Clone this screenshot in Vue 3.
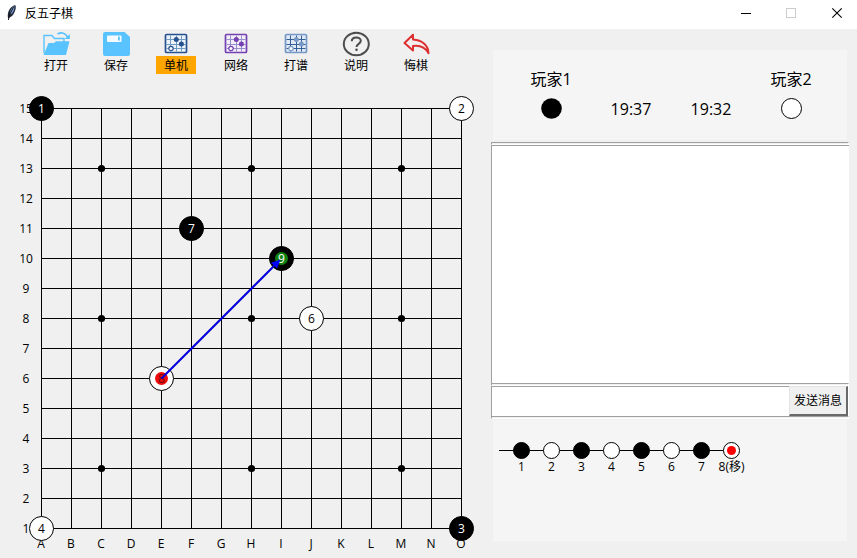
<script setup>
const tools = [
  { id: 'open', label: '打开' },
  { id: 'save', label: '保存' },
  { id: 'single', label: '单机', active: true, dark: '#27528f', line: '#6f9cc4', fill: '#edf3f8' },
  { id: 'net', label: '网络', dark: '#7440b2', line: '#9590c9', fill: '#f3edfa' },
  { id: 'record', label: '打谱', dark: '#7898c6', line: '#345e97', fill: '#e1e9f4' },
  { id: 'help', label: '说明' },
  { id: 'undo', label: '悔棋' },
]
const px = (c) => 41.5 + c * 30
const py = (row) => 18.5 + (15 - row) * 30
const lines = Array.from({ length: 15 }, (_, i) => i)
const letters = 'ABCDEFGHIJKLMNO'.split('')
const stars = [2, 7, 12].flatMap((c) => [3, 8, 13].map((r) => ({ c, r })))
const stones = [
  { c: 0, r: 15, n: 1, black: true },
  { c: 14, r: 15, n: 2 },
  { c: 14, r: 1, n: 3, black: true },
  { c: 0, r: 1, n: 4 },
  { c: 9, r: 8, n: 6 },
  { c: 5, r: 11, n: 7, black: true },
  { c: 4, r: 6, n: 8, mark: '#ee0c0c' },
  { c: 8, r: 10, n: 9, black: true, mark: '#108010' },
]
const moves = ['1', '2', '3', '4', '5', '6', '7', '8(移)']
</script>

<template>
  <div class="window">
    <header class="titlebar">
      <svg class="feather" width="12" height="18" viewBox="0 0 12 18">
        <path d="M2 14C1 9 3 3 9 1c2 1 0 8-3 11l-3 2z" fill="#20283a" />
        <path d="M4 10C4 6 6 3 8.500 2c0 3-1 6-3 8z" fill="#7fa3dc" />
        <path d="M7.500 3L3 12l-.5 4" stroke="#111" fill="none" />
      </svg>
      <span class="title">反五子棋</span>
      <svg class="controls" width="137" height="29" viewBox="0 0 137 29" shape-rendering="crispEdges">
        <path d="M21 13.500h10" stroke="#000" />
        <rect x="66.500" y="8.500" width="9" height="9" fill="none" stroke="#ccc" />
        <path d="M112.300 8.300l9.400 9.400M121.700 8.300l-9.400 9.400" stroke="#000" shape-rendering="auto" stroke-width="1.100" />
      </svg>
    </header>

    <main class="content">
      <section class="left">
        <nav class="toolbar">
          <div v-for="t in tools" :key="t.id" class="tool">
            <svg width="28" height="26" viewBox="0 0 28 26">
              <g v-if="t.id === 'open'">
                <path d="M2 22V4.500h8l2.500 3H22V11" fill="none" stroke="#58c3ff" stroke-width="1.400" />
                <path d="M6.500 12H12l2-1.800h13.500L24 24H1.500z" fill="#58c3ff" />
                <path d="M15.500 3c4-2 8-1 10 3" fill="none" stroke="#58c3ff" stroke-width="1.800" />
                <path d="M27.800 3v5h-5z" fill="#58c3ff" />
              </g>
              <g v-else-if="t.id === 'save'">
                <path d="M3 1h19.500L28 6v17q0 2-2 2H3q-2 0-2-2V3q0-2 2-2z" fill="#58c3ff" />
                <rect x="5" y="4.500" width="14.500" height="6.500" rx="1" fill="#f6fbff" />
                <rect x="16" y="5.500" width="1.800" height="4" fill="#58c3ff" />
              </g>
              <g v-else-if="t.dark">
                <rect x="3.500" y="3.500" width="21" height="18" rx="1" :fill="t.fill" :stroke="t.dark" stroke-width="1.700" />
                <path d="M8.500 4.500v16M14.500 4.500v16M19.500 4.500v16M4.500 8.500h19M4.500 13.500h19M4.500 17.500h19" :stroke="t.line" stroke-width="1" />
                <circle cx="14.300" cy="8.500" r="2.500" :fill="t.dark" />
                <circle cx="19.400" cy="13" r="2.500" :fill="t.dark" />
                <circle cx="9" cy="17.500" r="2.200" fill="#fff" :stroke="t.dark" stroke-width="1.200" />
              </g>
              <g v-else-if="t.id === 'help'" fill="none" stroke="#4c4c4c">
                <ellipse cx="14.300" cy="13" rx="12.500" ry="11.200" stroke-width="2" />
                <path d="M9.800 10.300c0-5 9-5 9-.5 0 3.200-4.300 3-4.300 6.200" stroke-width="2" />
                <circle cx="14.500" cy="18.800" r="1.300" fill="#4c4c4c" stroke="none" />
              </g>
              <path v-else d="M11 3.700L2.500 12l8.500 7.500V15c7-1 12 1 15.500 7.200-.2-7.500-6-13.200-15.500-13.700z" fill="#f5eeee" stroke="#dc3030" stroke-width="2" stroke-linejoin="round" />
            </svg>
            <span class="tool-label" :class="{ active: t.active }">{{ t.label }}</span>
          </div>
        </nav>

        <svg class="board" width="491" height="468" viewBox="0 0 491 468">
          <g stroke="#000" shape-rendering="crispEdges">
            <template v-for="i in lines" :key="i">
              <line :x1="px(i)" y1="18" :x2="px(i)" y2="439" />
              <line x1="41" :y1="py(i + 1)" x2="462" :y2="py(i + 1)" />
            </template>
          </g>
          <circle v-for="s in stars" :key="s.c + '-' + s.r" :cx="px(s.c)" :cy="py(s.r)" r="3.600" />
          <g class="label">
            <text v-for="i in lines" :key="i" x="26" :y="py(i + 1) + 4.500">{{ i + 1 }}</text>
            <text v-for="(l, i) in letters" :key="l" :x="px(i) - 0.500" y="458">{{ l }}</text>
          </g>
          <g v-for="s in stones" :key="s.n" class="label">
            <circle :cx="px(s.c)" :cy="py(s.r)" r="12" :fill="s.black ? '#000' : '#fff'" stroke="#000" />
            <circle v-if="s.mark" :cx="px(s.c)" :cy="py(s.r)" r="6.500" :fill="s.mark" />
            <text :x="px(s.c)" :y="py(s.r) + 4.500" :class="{ light: s.black, maroon: s.n === 8 }">{{ s.n }}</text>
          </g>
          <path d="M161.500 288.500L276 174" stroke="#0000d8" stroke-width="2" />
          <path d="M280.500 169.500l-3.500 9-2.500-3-4-2.500z" fill="#00f" />
        </svg>
      </section>

      <section class="right">
        <div class="players">
          <div class="player">
            <span>玩家1</span>
            <svg width="22" height="22"><circle cx="11.500" cy="10.500" r="10.300" /></svg>
          </div>
          <span class="clock">19:37</span>
          <span class="clock">19:32</span>
          <div class="player">
            <span>玩家2</span>
            <svg width="22" height="22"><circle cx="11.500" cy="10.500" r="10" fill="#fff" stroke="#000" /></svg>
          </div>
        </div>
        <div class="sash"></div>
        <div class="messages"></div>
        <div class="sash"></div>
        <div class="entry">
          <div class="field"></div>
          <button class="send">发送消息</button>
        </div>
        <div class="sash"></div>
        <svg class="history" width="354" height="121" viewBox="0 0 354 121">
          <path d="M6 30.500h232" stroke="#000" />
          <g v-for="(m, i) in moves" :key="m" class="label">
            <circle :cx="28.500 + i * 30" cy="30.500" r="8" :fill="i % 2 ? '#fff' : '#000'" stroke="#000" />
            <circle v-if="i === 7" :cx="28.500 + i * 30" cy="30.500" r="4.500" fill="#f00" />
            <text :x="28.500 + i * 30" y="51">{{ m }}</text>
          </g>
        </svg>
      </section>
    </main>
  </div>
</template>

<style>
body {
  margin: 0;
  overflow: hidden;
}
</style>

<style scoped>
.window {
  width: 857px;
  height: 558px;
  background: #f0f0f0;
  color: #000;
  font: 12px "Open Sans", "Noto Sans CJK SC", sans-serif;
}
.titlebar {
  display: flex;
  height: 29px;
  background: #fff;
}
.feather {
  margin: 4px 0 0 6px;
}
.title {
  margin-left: 7px;
  line-height: 27px;
}
.controls {
  margin-left: auto;
}
.content {
  display: flex;
  height: 529px;
}
.left {
  width: 491px;
}
.toolbar {
  display: flex;
  height: 59px;
  padding: 2px 0 0 26px;
  box-sizing: border-box;
}
.tool {
  display: flex;
  flex-direction: column;
  align-items: center;
  width: 60px;
}
.tool svg {
  flex: none;
  margin-bottom: -1px;
}
.tool-label {
  width: 40px;
  height: 18px;
  line-height: 20px;
  text-align: center;
}
.active {
  background: #ffa500;
}
.board {
  display: block;
  margin-top: 2px;
}
.label text {
  text-anchor: middle;
  font-size: 12px;
}
.label .light {
  fill: #fff;
}
.label .maroon {
  fill: #70080c;
}
.right {
  display: flex;
  flex-direction: column;
  width: 358px;
  padding-top: 21px;
}
.players {
  display: flex;
  flex: none;
  height: 90px;
  margin: 0 2px;
  padding: 0 16px 0 18px;
  box-sizing: border-box;
  background: #f5f5f5;
  font-size: 16px;
}
.player {
  display: flex;
  flex-direction: column;
  align-items: center;
  width: 80px;
  padding-top: 18px;
  line-height: 22px;
}
.player svg {
  margin-top: 8px;
}
.clock {
  width: 80px;
  padding-top: 48px;
  line-height: 22px;
  text-align: center;
}
.sash {
  flex: none;
  height: 3px;
  box-sizing: border-box;
  border-top: 1px solid #a0a0a0;
  border-right: 1px solid #fff;
  border-left: 1px solid #a0a0a0;
  border-bottom: 1px solid #fff;
}
.players + .sash {
  margin-top: 2px;
}
.messages {
  height: 238px;
  box-sizing: border-box;
  border-top: 1px solid #a0a0a0;
  border-left: 1px solid #a0a0a0;
  background: #fff;
}
.entry {
  display: flex;
  height: 30px;
  padding-right: 1px;
  background: #fff;
}
.field {
  flex: 1;
  border-top: 1px solid #a0a0a0;
  border-left: 1px solid #a0a0a0;
}
.send {
  width: 59px;
  height: 30px;
  padding: 0;
  border: 1px solid;
  border-width: 1px 2px 2px 1px;
  border-color: #e3e3e3 #696969 #696969 #e3e3e3;
  background: #f0f0f0;
  color: #000;
  font: inherit;
  line-height: 26px;
  white-space: nowrap;
}
.history {
  flex: none;
  display: block;
  margin: 1px 2px 0;
  background: #f5f5f5;
}
</style>
